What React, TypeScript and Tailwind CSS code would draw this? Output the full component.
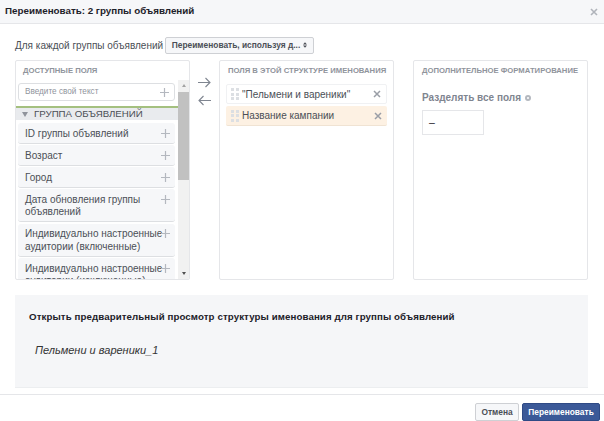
const fields = [
  "ID группы объявлений",
  "Возраст",
  "Город",
  "Дата обновления группы объявлений",
  "Индивидуально настроенные аудитории (включенные)",
  "Индивидуально настроенные аудитории (исключенные)",
];

function Plus({ className = "" }: { className?: string }) {
  return (
    <svg width="9" height="9" viewBox="0 0 9 9" className={className}>
      <path d="M4.5 0v9M0 4.5h9" stroke="#b4b8bf" strokeWidth="1.2" />
    </svg>
  );
}

function Cross() {
  return (
    <svg width="8" height="8" viewBox="0 0 8 8" className="shrink-0">
      <path d="M1 1l6 6M7 1L1 7" stroke="#9a9ea6" strokeWidth="1.5" />
    </svg>
  );
}

function Grip() {
  return (
    <div className="grid w-[7.5px] shrink-0 grid-cols-2 gap-[1.5px]">
      {Array.from({ length: 6 }).map((_, i) => (
        <span key={i} className="h-[3px] w-[3px] bg-[#dcdfe3]" />
      ))}
    </div>
  );
}

function PanelTitle({ children }: { children: string }) {
  return (
    <div className="whitespace-nowrap text-[7.7px] font-bold uppercase leading-[12px] text-[#90949c]">
      {children}
    </div>
  );
}

function Arrow({ flip }: { flip?: boolean }) {
  return (
    <svg width="13" height="11" viewBox="0 0 13 11" className={flip ? "rotate-180" : ""}>
      <path d="M0 5.5h12M7.5 1l4.5 4.5L7.5 10" fill="none" stroke="#7f8590" strokeWidth="1.1" />
    </svg>
  );
}

export default function App() {
  return (
    <div className="flex h-[421px] w-[604px] flex-col overflow-hidden bg-white font-['Liberation_Sans',sans-serif] text-[#4b4f56]">
      <div className="flex h-[24px] shrink-0 items-center justify-between border-b border-[#e5e6e9] bg-[#f6f7f9] pl-[5px] pr-[6px]">
        <div className="text-[9.8px] font-bold text-[#1d2129]">Переименовать: 2 группы объявлений</div>
        <svg width="8" height="8" viewBox="0 0 8 8">
          <path d="M1 1l6 6M7 1L1 7" stroke="#b0b4bb" strokeWidth="1.6" />
        </svg>
      </div>

      <div className="flex h-[36px] shrink-0 items-center px-[15px] pb-[7px] pt-[13px]">
        <span className="w-[150px] shrink-0 whitespace-nowrap text-[10px] leading-[15px]">Для каждой группы объявлений</span>
        <div className="flex h-[17px] w-[149px] shrink-0 items-center justify-center gap-[3px] whitespace-nowrap rounded-[2px] border border-[#ced0d4] bg-[#f6f7f9] text-[8.4px] font-bold text-[#4b4f56]">
          Переименовать, используя д...
          <svg width="4" height="6" viewBox="0 0 5 7">
            <path d="M2.5 0L5 3H0zM2.5 7L0 4h5z" fill="#4b4f56" />
          </svg>
        </div>
      </div>

      <div className="flex h-[220px] shrink-0 pl-[15px]">
        <div className="flex w-[175px] flex-col overflow-hidden rounded-[2px] border border-[#e5e6e9]">
          <div className="px-[7px] pt-[4px]">
            <PanelTitle>Доступные поля</PanelTitle>
          </div>
          <div className="flex min-h-0 flex-1 pt-[3px]">
            <div className="flex min-w-0 flex-1 flex-col overflow-hidden">
              <div className="ml-[2px] mr-[3px] mt-[3px] flex h-[18px] shrink-0 items-center justify-between whitespace-nowrap rounded-[3px] border border-[#dddfe2] bg-white pl-[6px] pr-[5px] text-[8.2px] text-[#90949c]">
                Введите свой текст
                <Plus />
              </div>
              <div className="mt-[5px] flex h-[14px] shrink-0 items-center gap-[6px] whitespace-nowrap border-t-2 border-[#a4c07f] bg-[#e9ebee] pl-[6px] text-[9.7px] leading-none text-[#4b4f56]">
                <span className="h-0 w-0 border-x-[3px] border-t-[5px] border-x-transparent border-t-[#90949c]" />
                ГРУППА ОБЪЯВЛЕНИЙ
              </div>
              <div className="flex flex-col gap-[1.5px] pl-[2px] pr-[3px] pt-[3px]">
                {fields.map((f) => (
                  <div
                    key={f}
                    className="flex shrink-0 items-start justify-between rounded-[3px] border-b border-[#dddfe2] bg-[#f6f7f9] pb-[2.5px] pl-[7px] pr-[5px] pt-[4.5px] text-[10px] leading-[12.5px]"
                  >
                    <span className="w-[139px] shrink-0">{f}</span>
                    <Plus className="-ml-[3px] mt-[1px] shrink-0" />
                  </div>
                ))}
              </div>
            </div>
            <div className="flex w-[11px] shrink-0 flex-col items-center bg-[#f1f1f1]">
              <span className="mt-[4px] h-0 w-0 border-x-[2.5px] border-b-[3px] border-x-transparent border-b-[#a3a3a3]" />
              <div className="mt-[5px] h-[88px] w-full bg-[#c1c1c1]" />
              <span className="mb-[4px] mt-auto h-0 w-0 border-x-[2.5px] border-t-[3px] border-x-transparent border-t-[#505050]" />
            </div>
          </div>
        </div>

        <div className="flex w-[29px] shrink-0 flex-col items-center gap-[7px] pt-[17px]">
          <Arrow />
          <Arrow flip />
        </div>

        <div className="flex w-[175px] flex-col rounded-[2px] border border-[#e5e6e9] px-[6px] pt-[4px]">
          <div className="pl-[2px]">
            <PanelTitle>Поля в этой структуре именования</PanelTitle>
          </div>
          <div className="mt-[7px] flex h-[20px] items-center gap-[3.5px] rounded-[2px] border border-[#f0f1f3] bg-white pl-[4px] pr-[5px] text-[10px]">
            <Grip />
            <span className="flex-1">"Пельмени и вареники"</span>
            <Cross />
          </div>
          <div className="mt-[2px] flex h-[20px] items-center gap-[3.5px] rounded-[2px] border-b border-[#f0e3d3] bg-[#fdf1e3] pl-[5px] pr-[5px] text-[10px]">
            <Grip />
            <span className="flex-1">Название кампании</span>
            <Cross />
          </div>
        </div>

        <div className="ml-[19px] flex w-[175px] flex-col rounded-[2px] border border-[#e5e6e9] px-[8px] pt-[4px]">
          <PanelTitle>Дополнительное форматирование</PanelTitle>
          <div className="mt-[14px] flex items-center gap-[4px] text-[10px] font-bold leading-[14px] text-[#7f8590]">
            Разделять все поля
            <span className="h-[6px] w-[6px] rounded-full border-2 border-[#b4b8bf]" />
          </div>
          <div className="mt-[5px] flex h-[25px] w-[62px] items-center border border-[#e5e6e9] bg-white pl-[6px] text-[10.5px] text-[#1d2129]">
            –
          </div>
        </div>
      </div>

      <div className="ml-[15px] mt-[15px] h-[93px] w-[573px] shrink-0 border-b border-[#eceef0] bg-[#f5f6f8] pl-[14px] pt-[15px]">
        <div className="whitespace-nowrap text-[9.7px] font-bold leading-[13px] text-[#1d2129] [letter-spacing:0.1px]">
          Открыть предварительный просмотр структуры именования для группы объявлений
        </div>
        <div className="ml-[6px] mt-[20px] text-[11px] italic leading-[14px] text-[#333333]">Пельмени и вареники_1</div>
      </div>

      <div className="mt-[6px] flex flex-1 items-start justify-end gap-[3px] border-t border-[#e5e6e9] pr-[4px] pt-[8px]">
        <button className="h-[18px] w-[44px] rounded-[2px] border border-[#ced0d4] bg-[#f6f7f9] text-[8.4px] font-bold text-[#4b4f56]">
          Отмена
        </button>
        <button className="h-[18px] w-[78px] rounded-[2px] border border-[#2f4a85] bg-[#3b5998] text-[8.4px] font-bold text-white">
          Переименовать
        </button>
      </div>
    </div>
  );
}
